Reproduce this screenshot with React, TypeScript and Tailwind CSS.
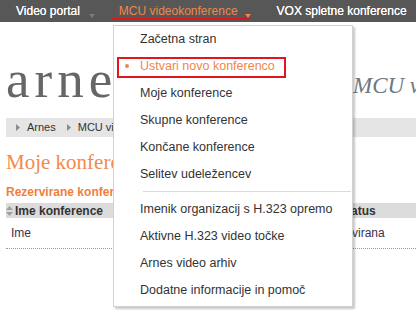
import { ReactNode } from 'react'

const menu: { label: string; active?: boolean }[] = [
  { label: 'Začetna stran' },
  { label: 'Ustvari novo konferenco', active: true },
  { label: 'Moje konference' },
  { label: 'Skupne konference' },
  { label: 'Končane konference' },
  { label: 'Selitev udeležencev' },
]

const menu2 = [
  'Imenik organizacij s H.323 opremo',
  'Aktivne H.323 video točke',
  'Arnes video arhiv',
  'Dodatne informacije in pomoč',
]

function DownArrow({ color }: { color: string }) {
  return (
    <svg width="6" height="4" viewBox="0 0 6 4" className="mt-[14px]">
      <path d="M0 0 L6 0 L3 4 Z" fill={color} />
    </svg>
  )
}

function Crumb({ children }: { children: ReactNode }) {
  return (
    <div className="flex items-center">
      <svg width="4" height="7" viewBox="0 0 4 7" className="mr-[7px]">
        <path d="M0 0 L4 3.5 L0 7 Z" fill="#8a8a8a" />
      </svg>
      <span>{children}</span>
    </div>
  )
}

function SortIcon() {
  return (
    <svg width="7" height="10" viewBox="0 0 7 10" className="mr-[2px]">
      <path d="M0 4 L3.5 0 L7 4 Z" fill="#a0a0a0" />
      <path d="M0 6 L3.5 10 L7 6 Z" fill="#a0a0a0" />
    </svg>
  )
}

export default function App() {
  return (
    <div className="relative w-[416px] h-[313px] overflow-hidden bg-white" style={{ fontFamily: '"Liberation Sans", Arial, sans-serif' }}>
      {/* top navigation */}
      <div className="flex h-[22px] bg-[#575757] text-[12px] leading-[22px]">
        <div className="flex pl-[16px] gap-[9px]">
          <span className="text-white [text-shadow:0_0_0.4px_#fff]">Video portal</span>
          <DownArrow color="#7c7c7c" />
        </div>
        <div className="flex pl-[24px] gap-[7px]">
          <span className="text-[#f0874a]">MCU videokonference</span>
          <DownArrow color="#f0874a" />
        </div>
        <div className="flex pl-[26px]">
          <span className="text-white whitespace-nowrap [text-shadow:0_0_0.4px_#fff]">VOX spletne konference</span>
        </div>
      </div>

      {/* page */}
      <div className="pl-[6px]">
        <div className="flex h-[96px]" style={{ fontFamily: '"Liberation Serif", "Times New Roman", serif' }}>
          <div className="w-[347px] shrink-0 pt-[31px] text-[53px] leading-none tracking-[5px] text-[#666]">arnes</div>
          <div className="pt-[52px] text-[23px] leading-none italic whitespace-nowrap text-[#6e7883]">MCU videokonference</div>
        </div>

        <div className="flex h-[19px] items-center gap-[11px] bg-[#e5e5e5] pl-[10px] text-[11px] text-[#333] whitespace-nowrap">
          <Crumb>Arnes</Crumb>
          <Crumb>MCU videokonference</Crumb>
        </div>

        <h1 className="mt-[13px] text-[21px] leading-[24px] text-[#f38a4c] whitespace-nowrap" style={{ fontFamily: '"Liberation Serif", "Times New Roman", serif' }}>
          Moje konference
        </h1>
        <h2 className="mt-[10px] text-[12px] font-bold leading-[16px] text-[#f07f3d] whitespace-nowrap">Rezervirane konference</h2>

        <div className="mt-[3px] flex h-[15px] items-center bg-[#dcdcdc] text-[12px] font-bold text-[#333] whitespace-nowrap">
          <div className="flex w-[330px] items-center">
            <SortIcon />
            <span>Ime konference</span>
          </div>
          <div className="flex items-center pl-[3px]">
            <span>Status</span>
          </div>
        </div>
        <div className="flex h-[31px] items-center border-b border-dotted border-[#999] text-[12px] text-[#3b3050] whitespace-nowrap">
          <div className="w-[314px] pl-[5px]">Ime</div>
          <div>Rezervirana</div>
        </div>
      </div>

      {/* red underline annotation */}
      <div className="absolute left-[112px] top-[18px] h-[2px] w-[138px] bg-[#e3141b]" />

      {/* dropdown menu */}
      <div className="absolute left-[113px] top-[25px] w-[240px] border border-[#d2d2d2] bg-white pb-[2px] shadow-[2px_2px_2px_rgba(0,0,0,0.22)] text-[12.5px] text-[#333]">
        {menu.map((m) => (
          <div key={m.label} className="relative flex h-[27px] items-center pl-[26px] whitespace-nowrap">
            {m.active && <span className="absolute left-[11px] top-[11px] h-[4px] w-[4px] rounded-full bg-[#f0874a]" />}
            <span className={m.active ? 'text-[#f0874a]' : ''}>{m.label}</span>
          </div>
        ))}
        <div className="ml-[29px] mr-[1px] mt-[3px] mb-[4px] h-px bg-[#dcdcdc]" />
        {menu2.map((m) => (
          <div key={m} className="flex h-[27px] items-center pl-[26px] whitespace-nowrap">{m}</div>
        ))}
      </div>

      {/* red box annotation */}
      <div className="absolute left-[117px] top-[57px] h-[21px] w-[169px] border-2 border-[#e3141b]" />
    </div>
  )
}
